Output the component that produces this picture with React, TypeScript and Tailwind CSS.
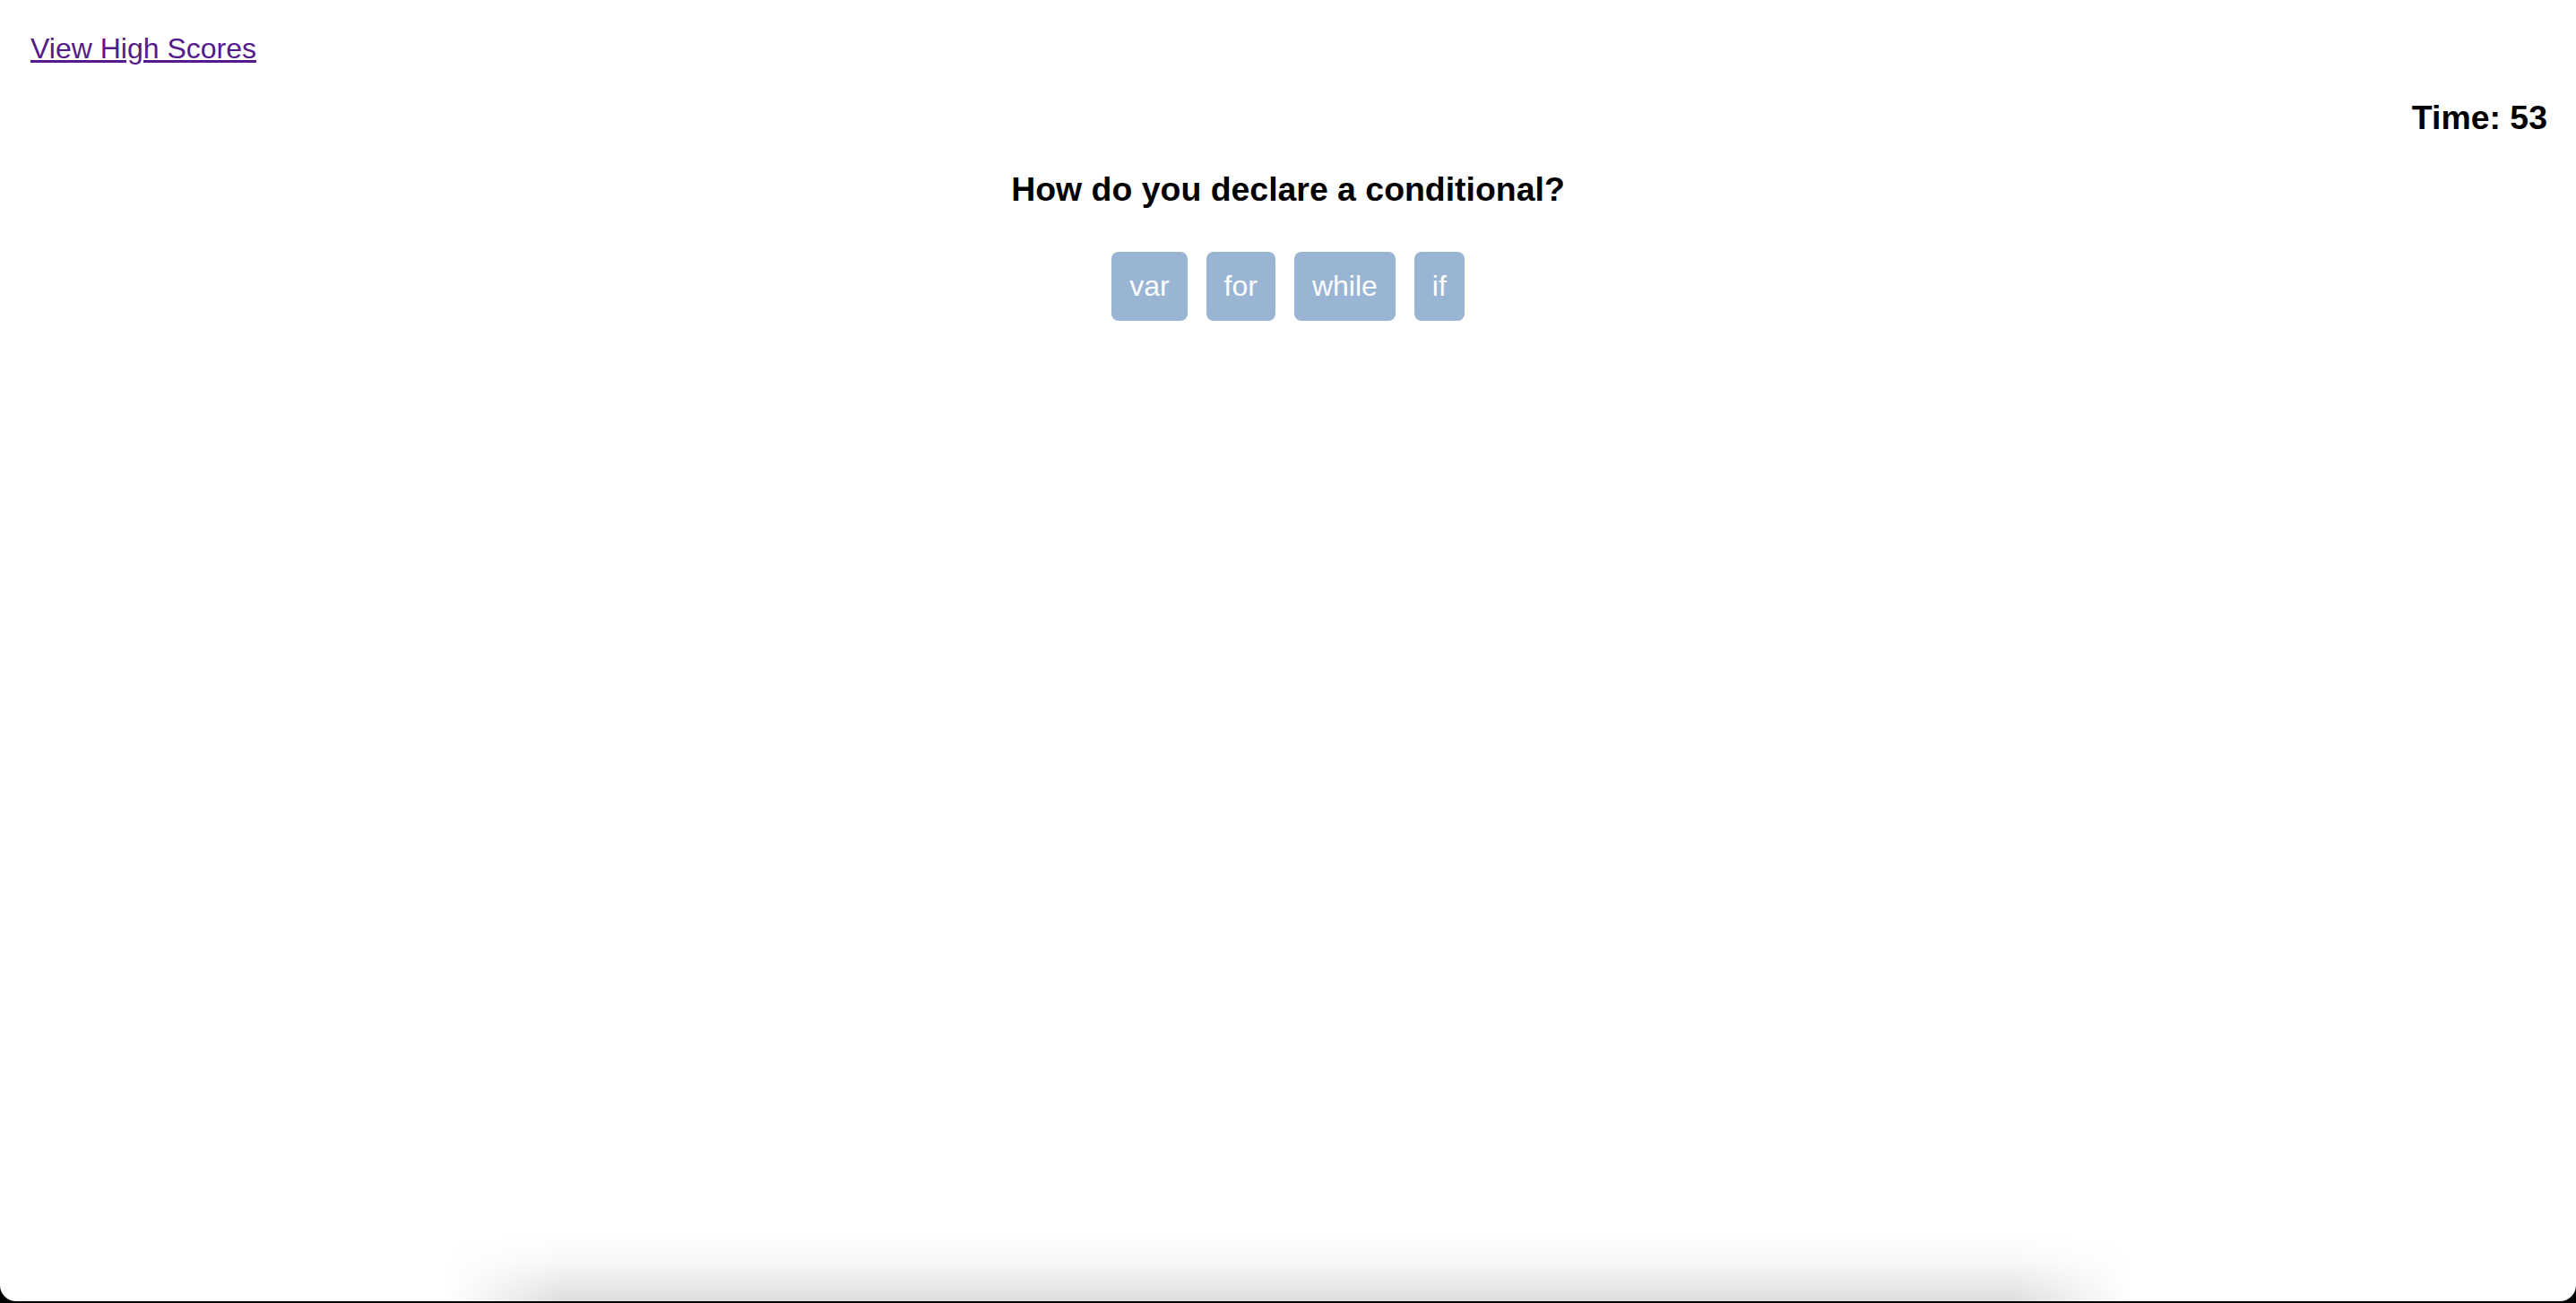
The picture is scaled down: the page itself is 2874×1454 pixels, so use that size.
import React from "react";

const answers = ["var", "for", "while", "if"];

export default function App() {
  return (
    <div className="h-[1454px] w-full bg-black" style={{ fontFamily: '"Liberation Sans", Arial, sans-serif' }}>
      <div className="relative flex h-[1452px] w-full flex-col overflow-hidden rounded-b-[18px] bg-white">
        <div className="pl-[34px] pt-[36px]">
          <a href="#" className="text-[32px] leading-[37px] text-[#551A8B] underline">
            View High Scores
          </a>
        </div>
        <div className="mt-[37px] pr-[32px] text-right text-[37.44px] font-bold leading-[43px] text-black">
          Time: 53
        </div>
        <h3 className="mt-[37px] text-center text-[37.44px] font-bold leading-[43px] text-black">
          How do you declare a conditional?
        </h3>
        <div className="mt-[48px] flex justify-center gap-[21px]">
          {answers.map((a) => (
            <button
              key={a}
              className="rounded-[8px] bg-[#9AB4D4] px-[20px] py-[20px] text-[32px] leading-[37px] text-white"
            >
              {a}
            </button>
          ))}
        </div>
        <div className="mt-auto mx-auto h-[72px] w-[1880px] bg-[linear-gradient(to_bottom,rgba(0,0,0,0),rgba(0,0,0,0.03)_40%,rgba(0,0,0,0.13))] [mask-image:linear-gradient(to_right,transparent,black_7%,black_93%,transparent)]" />
      </div>
    </div>
  );
}
